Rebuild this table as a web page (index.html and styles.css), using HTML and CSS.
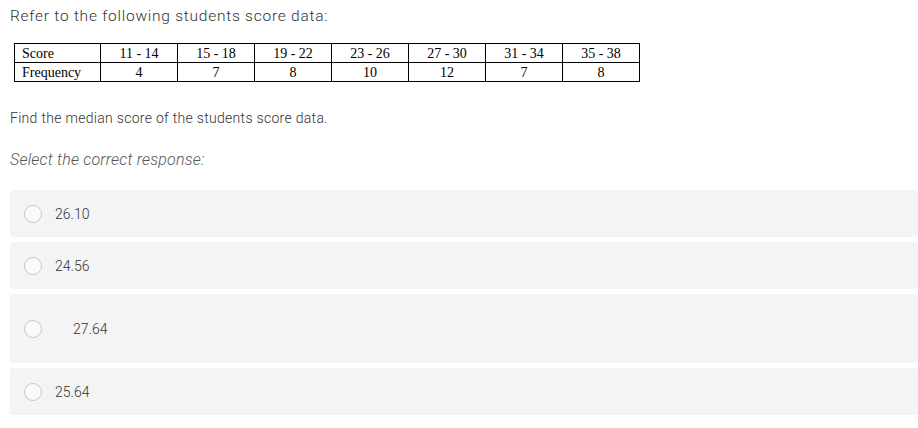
FILE: index.html
```html
<!DOCTYPE html>
<html>
<head>
<meta charset="utf-8">
<link rel="stylesheet" href="styles.css">
</head>
<body>
<div class="page">
  <p class="intro">Refer to the following students score data:</p>
  <table class="data">
    <tr>
      <td class="label">Score</td>
      <td>11 - 14</td><td>15 - 18</td><td>19 - 22</td><td>23 - 26</td><td>27 - 30</td><td>31 - 34</td><td>35 - 38</td>
    </tr>
    <tr>
      <td class="label">Frequency</td>
      <td>4</td><td>7</td><td>8</td><td>10</td><td>12</td><td>7</td><td>8</td>
    </tr>
  </table>
  <p class="question">Find the median score of the students score data.</p>
  <p class="prompt">Select the correct response:</p>
  <div class="options">
    <div class="option"><span class="radio"></span><span class="value">26.10</span></div>
    <div class="option"><span class="radio"></span><span class="value">24.56</span></div>
    <div class="option tall"><span class="radio"></span><span class="value indent">27.64</span></div>
    <div class="option"><span class="radio"></span><span class="value">25.64</span></div>
  </div>
</div>
</body>
</html>
```
FILE: styles.css
```css
html, body {
  margin: 0;
  padding: 0;
  background: #fff;
}
.page {
  padding: 0 0 0 10px;
  font-family: Roboto, "Liberation Sans", sans-serif;
  font-weight: 300;
  color: #333;
}
.intro {
  margin: 0;
  padding-top: 7px;
  font-size: 15.5px;
  line-height: 19px;
  letter-spacing: 0.75px;
}
.data {
  border-collapse: collapse;
  margin: 17px 0 0 4px;
  font-family: "Liberation Serif", serif;
  font-weight: 400;
  font-size: 14px;
  color: #000;
}
.data td {
  border: 1px solid #000;
  height: 18px;
  padding: 0;
  line-height: 15px;
  width: 76px;
  text-align: center;
  vertical-align: middle;
}
.data td.label {
  width: 78px;
  text-align: left;
  padding-left: 7px;
}
.question {
  margin: 28px 0 0;
  font-size: 14px;
  line-height: 17px;
  letter-spacing: 0.3px;
}
.prompt {
  margin: 23px 0 0;
  font-size: 16px;
  line-height: 19px;
  font-style: italic;
  letter-spacing: 0.2px;
  color: #555;
}
.options {
  margin-top: 21px;
  display: flex;
  flex-direction: column;
  gap: 5px;
}
.option {
  background: #f4f4f4;
  border-radius: 3px;
  height: 47px;
  display: flex;
  align-items: center;
  padding-left: 14px;
}
.option.tall {
  height: 69px;
}
.radio {
  width: 16px;
  height: 16px;
  border: 1px solid #c8c8c8;
  border-radius: 50%;
  background: #fafafa;
  flex: none;
}
.value {
  margin-left: 13px;
  font-size: 14px;
  color: #333;
}
.value.indent {
  margin-left: 31px;
}
```
